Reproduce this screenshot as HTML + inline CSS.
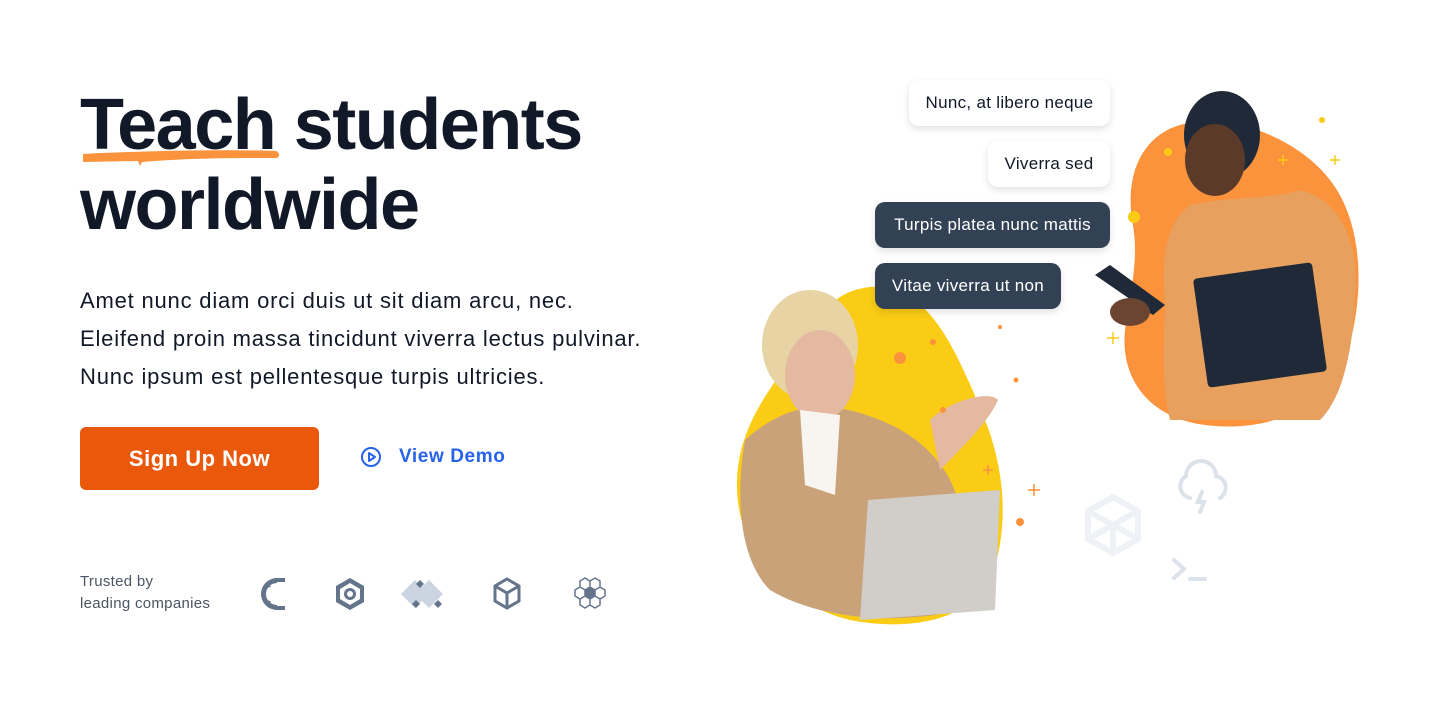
<!DOCTYPE html>
<html><head><meta charset="utf-8"><style>
*{margin:0;padding:0;box-sizing:border-box}
body{width:1440px;height:705px;background:#fff;font-family:"Liberation Sans",sans-serif;position:relative;overflow:hidden;color:#111827}
h1{position:absolute;left:80px;top:85px;font-size:72px;line-height:80px;font-weight:700;letter-spacing:-1.5px;color:#111827}
p.lead{position:absolute;left:80px;top:282px;font-size:22px;line-height:38px;color:#111827;letter-spacing:0.8px}
.btn{position:absolute;left:80px;top:427px;width:239px;height:63px;background:#ea580c;border-radius:6px;color:#fff;font-size:22px;font-weight:700;text-align:center;line-height:64px;letter-spacing:0.5px}
.demo{position:absolute;left:360px;top:446px;color:#2563eb;font-size:19px;font-weight:700;display:flex;align-items:center;gap:17px;letter-spacing:0.6px}
.trust{position:absolute;left:80px;top:571px;font-size:15px;line-height:22px;color:#4b5563;letter-spacing:0.3px}
.bub{position:absolute;height:46px;border-radius:10px;font-size:17px;line-height:46px;padding:0;text-align:center;white-space:nowrap;box-shadow:0 3px 8px rgba(0,0,0,.12);letter-spacing:0.3px}
.w{background:#fff;color:#111827}
.d{background:#334155;color:#fff}
</style></head><body>
<h1>Teach students<br>worldwide</h1>
<svg style="position:absolute;left:80px;top:146px" width="205" height="22"><path d="M3 8 C60 5 140 3 196 5 C200 6 200 12 196 12 C150 12 110 12 62 16 L60 20 L58 15 L3 16Z" fill="#fb923c"/></svg>
<p class="lead">Amet nunc diam orci duis ut sit diam arcu, nec.<br>Eleifend proin massa tincidunt viverra lectus pulvinar.<br>Nunc ipsum est pellentesque turpis ultricies.</p>
<div class="btn">Sign Up Now</div>
<div class="demo"><svg width="22" height="22" viewBox="0 0 22 22"><circle cx="11" cy="11" r="9" fill="none" stroke="#2563eb" stroke-width="2"/><path d="M9 7 L15 11 L9 15Z" fill="none" stroke="#2563eb" stroke-width="2" stroke-linejoin="round"/></svg>View Demo</div>
<div class="trust">Trusted by<br>leading companies</div>
<svg style="position:absolute;left:255px;top:574px" width="360" height="40" viewBox="0 0 360 40">
<g fill="#64748b">
<path d="M22 4 a15 15 0 0 0 0 32 v-5 a10 10 0 0 1 0-22z"/><rect x="20" y="4" width="10" height="4"/><rect x="20" y="32" width="10" height="4"/><path d="M14 10 a11 11 0 0 0 0 20 l2-3 a7 7 0 0 1 0-14z"/>
<path d="M95 4 l14 8 v16 l-14 8 l-14-8 v-16z"/><path d="M95 9 l10 6 v10 l-10 6 l-10-6 v-10z" fill="#fff"/><circle cx="95" cy="20" r="6"/><circle cx="95" cy="20" r="3" fill="#fff"/>
<path d="M160 6 l14 14 l-14 14 l-14-14z" fill="#cbd5e1"/><path d="M174 6 l14 14 l-14 14 l-14-14z" fill="#cbd5e1"/><path d="M165 6 l4 4 l-4 4 l-4-4z"/><path d="M183 26 l4 4 l-4 4 l-4-4z"/><path d="M161 26 l4 4 l-4 4 l-4-4z"/>
</g>
<g fill="none" stroke="#64748b" stroke-width="3"><path d="M252 5 l12 7 v15 l-12 7 l-12-7 v-15z M240 12 l12 7 l12-7 M252 19 v15"/>
<g stroke-width="1.5"><path d="M330 4 l5 3 v6 l-5 3 l-5-3 v-6z M340 4 l5 3 v6 l-5 3 l-5-3 v-6z M325 13 l5 3 v6 l-5 3 l-5-3 v-6z M345 13 l5 3 v6 l-5 3 l-5-3 v-6z M330 22 l5 3 v6 l-5 3 l-5-3 v-6z M340 22 l5 3 v6 l-5 3 l-5-3 v-6z"/></g></g>
<path d="M335 13 l5 3 v6 l-5 3 l-5-3 v-6z" fill="#64748b"/>
</svg>
<svg style="position:absolute;left:730px;top:80px" width="680" height="560" viewBox="730 80 680 560">
<path d="M1180 125 C1230 110 1300 140 1330 180 C1365 225 1365 300 1345 360 C1320 415 1260 432 1205 425 C1150 418 1120 380 1125 330 C1130 290 1140 260 1132 220 C1125 170 1145 135 1180 125Z" fill="#fb923c"/>
<path d="M870 287 C930 280 960 360 985 420 C1005 470 1010 530 990 580 C965 625 900 630 850 620 C790 605 740 560 737 490 C735 420 780 380 810 330 C830 300 845 290 870 287Z" fill="#facc15"/>
<path d="M1190 205 C1240 195 1270 200 1300 190 C1340 200 1360 240 1355 300 C1352 360 1340 400 1320 420 L1170 420 C1160 380 1165 330 1165 300 C1160 250 1170 220 1190 205Z" fill="#e8a05e"/>
<ellipse cx="1222" cy="135" rx="38" ry="44" fill="#1f2937"/>
<ellipse cx="1215" cy="160" rx="30" ry="36" fill="#5b3a29"/>
<rect x="1200" y="270" width="120" height="110" rx="4" fill="#1f2937" transform="rotate(-8 1260 325)"/>
<path d="M1095 275 l15-10 l55 40 l-12 10z" fill="#1f2937"/>
<ellipse cx="1130" cy="312" rx="20" ry="14" fill="#6b4532"/>
<path d="M745 440 C790 400 830 400 880 420 C930 440 960 480 960 520 L960 610 C900 625 820 620 770 590 C740 560 735 500 745 440Z" fill="#c9a27a"/>
<ellipse cx="810" cy="345" rx="48" ry="55" fill="#e8d3a4"/>
<ellipse cx="820" cy="375" rx="35" ry="45" fill="#e4b9a0"/>
<path d="M800 410 l40 5 l-5 80 l-30 -10z" fill="#f8f5f0"/>
<path d="M930 420 C950 400 990 390 998 400 C990 420 960 450 940 470z" fill="#e4b9a0"/>
<path d="M868 500 L1000 490 L995 610 L860 620z" fill="#d1cdc8"/>
<g fill="#fb923c"><circle cx="900" cy="358" r="6"/><circle cx="933" cy="342" r="3"/><circle cx="943" cy="410" r="3"/><circle cx="1016" cy="380" r="2.5"/><circle cx="1020" cy="522" r="4"/><circle cx="1000" cy="327" r="2"/></g>
<g fill="#facc15"><circle cx="1134" cy="217" r="6"/><circle cx="1168" cy="152" r="4"/><circle cx="1322" cy="120" r="3"/></g>
<g stroke="#fb923c" stroke-width="1.5"><path d="M1034 484 v12 M1028 490 h12 M988 465 v10 M983 470 h10"/></g>
<g stroke="#facc15" stroke-width="1.5"><path d="M1113 332 v12 M1107 338 h12 M1335 155 v10 M1330 160 h10 M1283 155 v10 M1278 160 h10"/></g>
<g fill="none" stroke="#eef2f7" stroke-width="6" stroke-linejoin="round"><path d="M1113 497 l25 14 v28 l-25 14 l-25-14 v-28z M1088 511 l25 14 l25-14 M1113 525 v28 M1088 539 l25-14 M1138 539 l-25-14"/></g>
<g fill="none" stroke="#dbe2ea" stroke-width="4" stroke-linecap="round"><path d="M1190 498 a12 12 0 0 1 -4 -22 a15 15 0 0 1 30 0 a12 12 0 0 1 4 22 M1202 492 l-4 10 h6 l-4 10"/><path d="M1174 560 l10 9 l-10 9 M1190 579 h15"/></g>
</svg>
<div class="bub w" style="left:909px;top:80px;width:201px">Nunc, at libero neque</div>
<div class="bub w" style="left:988px;top:141px;width:122px">Viverra sed</div>
<div class="bub d" style="left:875px;top:202px;width:235px">Turpis platea nunc mattis</div>
<div class="bub d" style="left:875px;top:263px;width:186px">Vitae viverra ut non</div>
</body></html>
